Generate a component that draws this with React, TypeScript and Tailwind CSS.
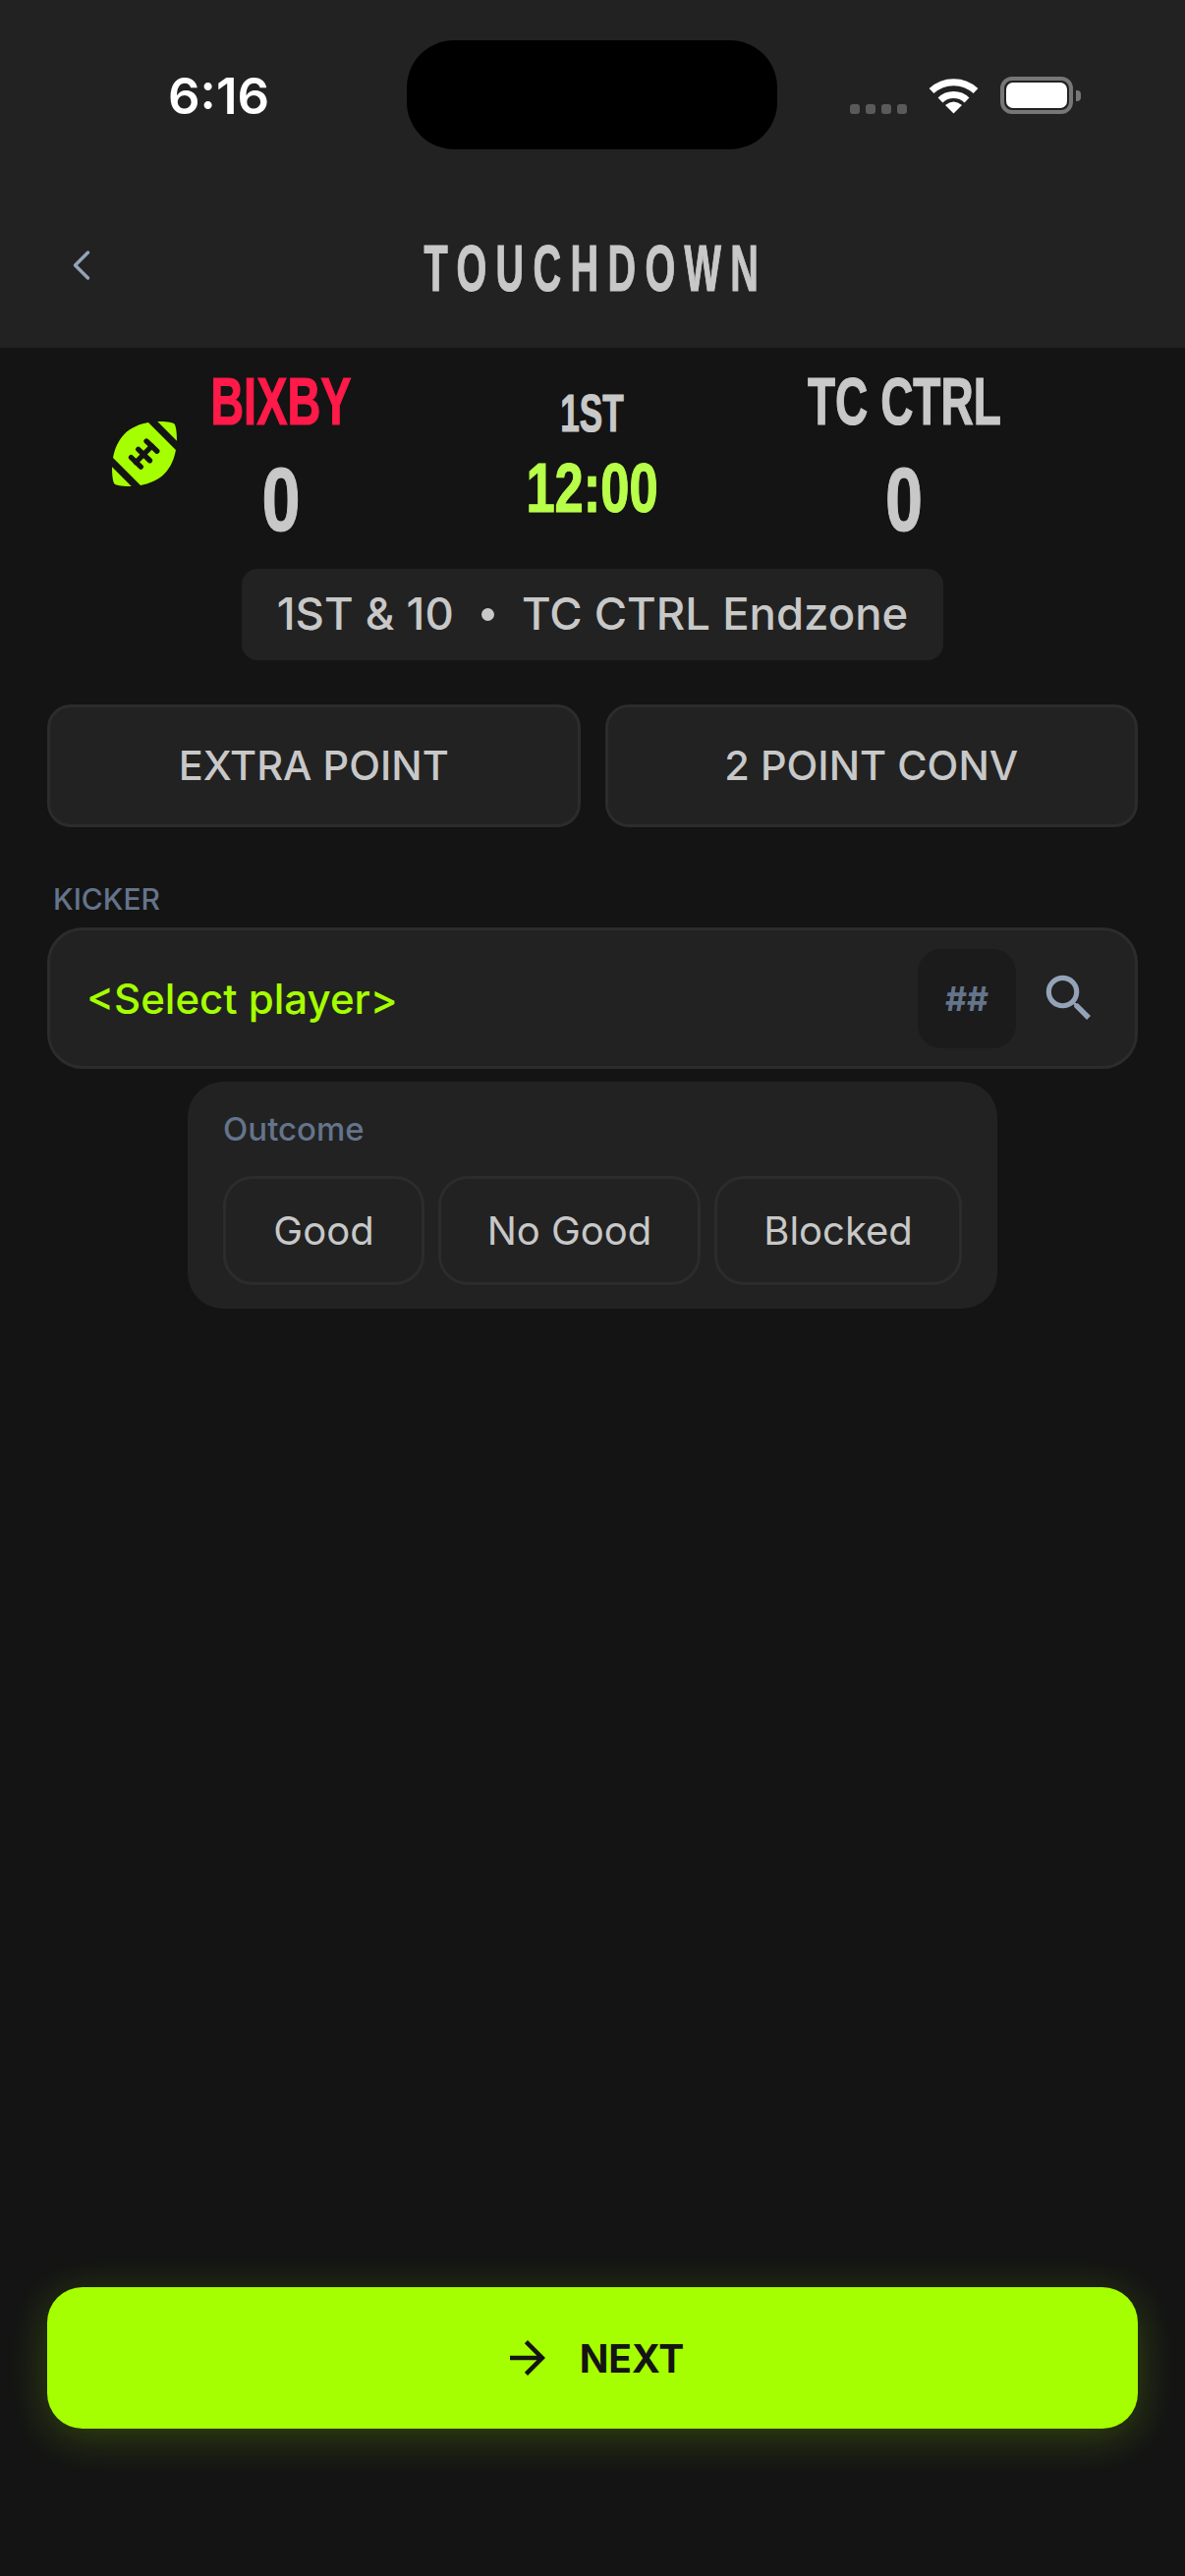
import React from "react";
import { ChevronLeft } from "lucide-react";
import { MdArrowForward, MdSearch } from "react-icons/md";

const condensed = "font-['Liberation_Sans',sans-serif] font-bold [-webkit-text-stroke:1.2px_currentColor]";
const body = "font-['Inter','Noto_Sans',sans-serif]";

export default function App() {
  return (
    <div className={`flex h-[2622px] w-[1206px] flex-col bg-[#141414] text-[#c8c8c8] ${body}`}>
      <Header />
      <ScoreRow />
      <div className="mt-[25px] flex justify-center">
        <div className="flex h-[93px] w-[714px] items-center justify-center rounded-[16px] bg-[#222222] text-[45.5px] font-medium">
          <span>1ST &amp; 10</span>
          <span className="mx-[28px] h-[13px] w-[13px] rounded-full bg-[#c8c8c8]" />
          <span>TC CTRL Endzone</span>
        </div>
      </div>

      <div className="mt-[45px] grid grid-cols-2 gap-[25px] px-[48px]">
        <ModeButton label="EXTRA POINT" />
        <ModeButton label="2 POINT CONV" />
      </div>

      <div className="mt-[50px] px-[48px]">
        <div className="pl-[6px] text-[30px] leading-[46px] font-medium text-[#64748b]">KICKER</div>
        <div className="mt-[6px] flex h-[144px] items-center rounded-[36px] border-[3px] border-[#2c2c2c] bg-[#222222] pr-[44px] pl-[37px]">
          <span className="flex-1 text-[42px] font-medium text-[#a6ff00]">&lt;Select player&gt;</span>
          <div className="flex h-[101px] w-[100px] items-center justify-center rounded-[24px] bg-[#1b1b1b] text-[34px] font-bold text-[#64748b]">##</div>
          <MdSearch size={62} className="mr-[-8px] ml-[23px] text-[#94a3b8]" />
        </div>
      </div>

      <div className="mt-[13px] flex justify-center">
        <div className="h-[231px] w-[824px] rounded-[36px] bg-[#222222] px-[36px] pt-[28px]">
          <div className="text-[33px] leading-[40px] font-medium text-[#64748b]">Outcome</div>
          <div className="mt-[28px] flex gap-[14px]">
            <OutcomeButton label="Good" width="w-[205px]" />
            <OutcomeButton label="No Good" width="w-[267px]" />
            <OutcomeButton label="Blocked" width="w-[252px]" />
          </div>
        </div>
      </div>

      <div className="flex-1" />

      <div className="px-[48px] pb-[150px]">
        <button className="flex h-[144px] w-full items-center justify-center gap-[26px] rounded-[36px] bg-[#a6ff00] text-[#141414] shadow-[0_8px_44px_rgba(166,255,0,0.22)]">
          <MdArrowForward size={54} />
          <span className="text-[39px] leading-none font-bold">NEXT</span>
        </button>
      </div>
    </div>
  );
}

function Header() {
  return (
    <div className="h-[354px] bg-[#222222]">
      <div className="flex h-[152px] pt-[41px]">
        <div className="w-[414px] pt-[27px] pl-[171px] text-[51px] leading-[60px] font-semibold text-white">6:16</div>
        <div className="h-[111px] w-[377px] rounded-[48px] bg-black" />
        <div className="flex flex-1 items-start pt-[37px] pl-[74px]">
          <div className="mt-[28px] flex gap-[6px]">
            <span className="h-[10px] w-[10px] rounded-[3px] bg-[#5a5a5a]" />
            <span className="h-[10px] w-[10px] rounded-[3px] bg-[#5a5a5a]" />
            <span className="h-[10px] w-[10px] rounded-[3px] bg-[#5a5a5a]" />
            <span className="h-[10px] w-[10px] rounded-[3px] bg-[#5a5a5a]" />
          </div>
          <svg width="51" height="38" viewBox="0 0 51 38" className="ml-[22px]">
            <path d="M3 14.5A33 33 0 0 1 48 14.5" fill="none" stroke="#ffffff" strokeWidth="7" />
            <path d="M12 24A19.5 19.5 0 0 1 39 24" fill="none" stroke="#ffffff" strokeWidth="7" />
            <path d="M25.5 37.5L17 29Q25.5 22 34 29Z" fill="#ffffff" />
          </svg>
          <div className="ml-[22px] flex items-center">
            <div className="h-[38px] w-[74px] rounded-[12px] border-[4px] border-[#777777] p-[2px]">
              <div className="h-full w-full rounded-[7px] bg-white" />
            </div>
            <div className="ml-[3px] h-[11px] w-[5px] rounded-r-[4px] bg-[#777777]" />
          </div>
        </div>
      </div>
      <div className="relative mt-[88px] flex justify-center pl-[6px]">
        <ChevronLeft size={52} strokeWidth={1.6} className="absolute top-[4px] left-[57px] text-[#94a3b8]" />
        <span className={`${condensed} inline-block scale-x-[0.6] text-[66px] leading-[66px] tracking-[15.6px] whitespace-nowrap`}>TOUCHDOWN</span>
      </div>
    </div>
  );
}

function Football() {
  return (
    <svg width="88" height="88" viewBox="0 0 24 24" className="mt-[64px] mr-[-11px] ml-[-11px] shrink-0">
      <path fill="#a6ff00" d="M3.02 15.62c-.08 2.42.32 4.34.67 4.69s2.28.76 4.69.67l-5.36-5.36z" />
      <path fill="#a6ff00" d="M15.62 3.02l5.36 5.36c.08-2.42-.32-4.34-.67-4.69s-2.28-.76-4.69-.67z" />
      <path fill="#a6ff00" d="M13.08 3.28c-2.33.42-4.79 1.34-6.62 3.18s-2.76 4.29-3.18 6.62l7.63 7.63c2.34-.41 4.79-1.34 6.62-3.18s2.76-4.29 3.18-6.62l-7.63-7.63z" />
      <g stroke="#141414" strokeWidth="1.45" strokeLinecap="round" fill="none">
        <path d="M9.63 14.32L14.03 9.86" />
        <path d="M8.3 13L11 15.6" />
        <path d="M10.3 10.75L13.5 13.85" />
        <path d="M12.55 8.45L15.5 11.25" />
      </g>
    </svg>
  );
}

function ScoreRow() {
  return (
    <div className={`flex pl-[114px] ${condensed}`}>
      <Football />
      <div className="ml-[34px] flex w-[144px] flex-col items-center">
        <span className="mt-[20px] inline-block scale-x-[0.69] text-[68px] leading-[68px] text-[#ff1a4a]">BIXBY</span>
        <span className="mt-[22px] inline-block scale-x-[0.78] text-[90px] leading-[90px]">0</span>
      </div>
      <div className="ml-[145px] flex w-[200px] flex-col items-center">
        <span className="mt-[39px] inline-block scale-x-[0.65] text-[54px] leading-[54px]">1ST</span>
        <span className="mt-[15px] inline-block scale-x-[0.75] text-[70px] leading-[70px] text-[#b8ff4a]">12:00</span>
      </div>
      <div className="ml-[119px] flex w-[197px] flex-col items-center">
        <span className="mt-[20px] inline-block scale-x-[0.677] text-[68px] leading-[68px] whitespace-nowrap">TC CTRL</span>
        <span className="mt-[22px] inline-block scale-x-[0.76] text-[90px] leading-[90px]">0</span>
      </div>
    </div>
  );
}

function ModeButton({ label }: { label: string }) {
  return (
    <button className="flex h-[125px] items-center justify-center rounded-[24px] border-[3px] border-[#2c2c2c] bg-[#222222] text-[41.5px] font-medium">
      {label}
    </button>
  );
}

function OutcomeButton({ label, width }: { label: string; width: string }) {
  return (
    <button className={`flex h-[111px] items-center justify-center rounded-[30px] border-[3px] border-[#2c2c2c] text-[40px] ${width}`}>
      {label}
    </button>
  );
}
